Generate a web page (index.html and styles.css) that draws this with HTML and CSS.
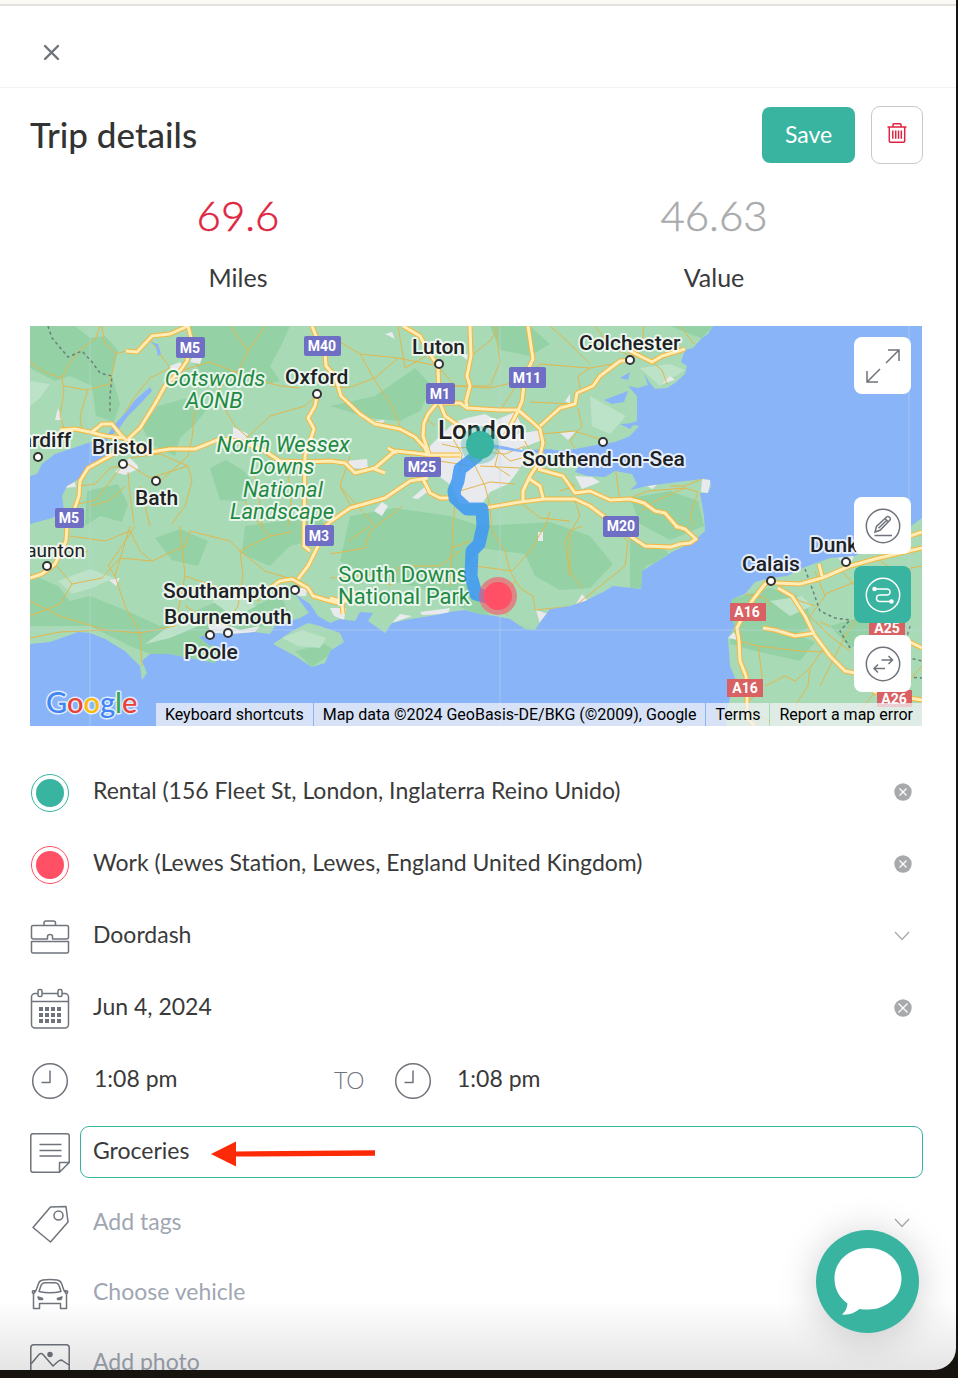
FILE: index.html
```html
<!DOCTYPE html>
<html lang="en">
<head>
    <meta charset="UTF-8">
    <meta name="viewport" content="width=device-width, initial-scale=1.0">
    <title>Trip details</title>
    <link rel="stylesheet" href="styles.css">
</head>
<body>
    <main class="panel">
        <div class="panel-bar">
            <button class="icon-button" type="button" aria-label="Close">
                <svg width="17" height="17" viewBox="0 0 17 17"><path d="M2 2l13 13M15 2L2 15" fill="none" stroke="#6f737b" stroke-width="2.4" stroke-linecap="round"/></svg>
            </button>
        </div>

        <header class="trip-header">
            <h1>Trip details</h1>
            <button class="save-button" type="button">Save</button>
            <button class="delete-button" type="button" aria-label="Delete trip">
                <svg width="20" height="20" viewBox="0 0 20 20" fill="none" stroke="#de2440" stroke-width="1.5">
                    <path d="M.5 4h19M6 4V1.700q0-.9.9-.9h6.200q.9 0 .9.900V4M2.300 4v14q0 1.200 1.200 1.200h13q1.200 0 1.200-1.200V4M5.800 7.500v8.300M8.700 7.500v8.300M11.500 7.500v8.300M14.300 7.500v8.300"/>
                </svg>
            </button>
        </header>

        <section class="stats">
            <div class="stat">
                <span class="stat-number miles">69.6</span>
                <span class="stat-label">Miles</span>
            </div>
            <div class="stat">
                <span class="stat-number value">46.63</span>
                <span class="stat-label">Value</span>
            </div>
        </section>

        <section class="map">
            <svg class="map-canvas" viewBox="0 0 892 400" preserveAspectRatio="xMidYMid slice">
                <defs>
                    <clipPath id="land-clip">
                        <path id="england" d="M0 0H683L678 8 672 12 663 22 655 24 651 36 657 40 655 48 645 57 637 62 625 63 620 57 614 48 618 59 608 62 598 60 607 70 607 95 598 98 609 100 600 110 585 116 566 119 545 123 520 125 548 129 549 140 545 146 558 150 575 151 585 145 602 148 607 158 600 164 617 160 640 157 672 153 680 154 681 160 678 167 670 167 674 190 675 205 665 214 655 220 642 226 636 230 612 245 611 263 583 260 575 265 555 275 540 280 520 283 510 296 505 304 495 303 480 293 465 290 450 288 435 284 420 286 400 290 375 294 362 297 355 307 338 295 343 287 330 286 325 295 310 293 300 297 288 290 280 278 265 268 279 287 270 292 245 300 240 308 225 306 200 308 185 307 172 313 183 318 190 328 185 337 165 333 140 328 120 328 112 335 117 347 112 354 110 340 95 325 75 313 60 307 48 306 40 309 20 316 0 318V198L22 192 34 185 32 170 37 160 50 152 60 140 80 130 75 118 80 110 55 118 25 128 12 138 7 148 0 150Z"/>
                        <path id="wight" d="M243 318L262 305 278 297 290 300 310 307 314 316 300 325 295 337 282 341 265 330Z"/>
                        <path id="france" d="M892 192L881 200 825 230 800 232 775 241 757 250 740 252 725 256 715 268 702 273 700 290 705 300 698 312 700 340 705 352 698 380 696 400H892Z"/>
                    </clipPath>
                    <g id="major-roads">
                        <path d="M158 0L161 12 157 35 150 45 135 60 125 78 110 102 98 113M96 25L107 26 122 10 140 8 158 0"/>
                        <path d="M30 104L45 103 60 106 75 110 95 112M62 106L72 98 82 98 90 108 97 115M98 113L115 127 140 123 165 123 190 113 210 115 235 125 250 135 275 136 300 135 315 137 325 147 345 142 365 125 385 127 400 129 430 129M358 122L367 127"/>
                        <path d="M95 120L80 130 58 142 50 155 49 170 42 190 37 200 36 215 25 238 12 248 0 252"/>
                        <path d="M282 0L288 15 295 25 296 40 305 50 311 70 330 88 345 98 370 103 385 111 395 122 398 130"/>
                        <path d="M287 70L285 80 278 92 284 103 275 130 274 200 274 220 280 225"/>
                        <path d="M373 0L390 10 400 28 408 40 409 75 415 90 425 97 435 105M440 0L441 30 437 50 440 60 436 75 437 82M498 0L503 33 495 50 492 75 488 85 475 110"/>
                        <path d="M399 128L393 110 394 97 398 88 407 77 430 77 437 82 470 84 488 84 500 94 510 103 513 117 508 138 500 150 493 165 493 176M393 153L400 167 410 172 420 172M455 182L490 176 515 173 545 173 560 180 580 195 600 210 615 220 641 221 650 218 660 217 666 213 655 203 645 200"/>
                        <path d="M508 143L533 150 545 167 560 165 580 174 600 173 614 177 625 185 635 187 648 202M498 152L510 160 513 172M342 142L355 147"/>
                        <path d="M600 34L590 35 570 50 563 60 547 67 545 78 530 82 510 100M600 25L622 36 632 30 655 23"/>
                        <path d="M398 152L380 155 355 172 320 182 300 196 290 205 288 220 278 240 268 253M240 262L250 255 262 253 278 262 283 270 300 275 312 278 313 288M300 272L314 276 324 264"/>
                        <path d="M741 255L735 258 722 275 712 292 707 302 709 315 710 335 716 350 717 370 717 392 725 400M745 257L770 258 792 252 820 240 845 233 870 227 892 222M789 238L792 250M748 262L762 270 775 290 785 310 800 330 815 345 825 347 845 366 892 374M733 302L745 304 765 310 785 307M872 312L892 322M880 210L892 206"/>
                    </g>
                </defs>

                <rect width="892" height="400" fill="#8ab4f8"/>
                <g fill="#a8dab5">
                    <use href="#england"/>
                    <use href="#wight"/>
                    <use href="#france"/>
                </g>

                <g clip-path="url(#land-clip)">
                    <!-- woodland and hills -->
                    <g fill="#94d2a5">
                        <path d="M0 0H45L60 12 75 10 88 24 82 50 90 78 84 96 66 90 62 60 40 50 25 55 0 42Z"/>
                        <path d="M160 0H260L250 22 240 40 250 55 230 60 196 48 175 52 165 38Z"/>
                        <path d="M128 80L165 70 178 82 165 98 150 112 145 130 120 118 112 100Z"/>
                        <path d="M180 142L196 134 214 145 222 155 216 175 190 174Z"/>
                        <path d="M57 165L88 158 98 178 92 196 70 190 55 200Z"/>
                        <path d="M0 248L28 260 40 275 60 270 95 284 130 300 165 285 200 270 225 280 250 268 258 285 235 300 190 308 190 340 120 328 100 320 60 300 0 300Z"/>
                        <path d="M125 212L150 203 178 215 168 240 142 234Z"/>
                        <path d="M215 200L290 190 300 210 260 220 240 240 212 228Z"/>
                        <path d="M300 80L345 70 385 42 402 60 390 85 370 95 340 92Z"/>
                        <path d="M320 190L365 182 420 190 450 200 520 196 560 210 583 238 560 262 530 264 505 250 495 228 450 222 430 250 460 290 505 304 445 288 390 262 340 250 310 235Z"/>
                        <path d="M600 172L640 165 668 175 674 200 640 214 610 198Z"/>
                        <path d="M600 212L636 224 640 232 615 240 612 262 600 262Z"/>
                        <path d="M265 325L295 318 305 325 282 341Z"/>
                        <path d="M702 273L740 262 775 272 782 300 765 308 785 316 770 335 725 325 700 318Z"/>
                        <path d="M800 300L835 290 845 310 820 322Z"/>
                        <path d="M640 0H683L672 12 660 8Z"/>
                        <path d="M460 0L500 0 520 18 500 30 470 24Z"/>
                    </g>
                    <g fill="#bce2c7">
                        <path d="M28 255L60 243 84 252 62 262 42 268ZM115 318L150 292 178 296 140 312ZM182 275L210 268 226 280 205 292ZM560 70L596 90 580 108 562 100ZM610 42L640 38 655 44 630 60ZM740 275L772 270 782 280 760 290ZM0 55L20 58 10 72 0 80ZM252 312L272 304 296 312 290 322 268 320Z"/>
                    </g>
                    <!-- built-up areas -->
                    <g fill="#e8eaed">
                        <path d="M437 92L455 88 466 94 485 86 492 100 485 108 512 104 512 114 492 122 494 136 486 148 478 158 460 166 452 178 430 178 422 160 398 142 400 120 412 108 425 96Z"/>
                        <path d="M85 146L100 132 108 140 108 143 95 149ZM203 101L218 108 216 114 203 114ZM140 40L150 36 155 42 142 50ZM315 135L337 133 338 143 320 142ZM545 150L562 151 570 156 552 163ZM530 107L546 105 538 114ZM25 94L28 82 32 94ZM165 26L172 32 170 38 160 36ZM355 8L362 6 365 13ZM432 30L438 28 437 34Z"/>
                        <path d="M178 300L195 298 210 304 230 300 225 306 200 310 183 312ZM264 262L277 262 276 270 268 270ZM79 254L90 252 86 260ZM300 282L316 282 314 294 304 290ZM362 297L370 288 382 290ZM390 286L420 282 418 288 392 289ZM506 284L518 288 510 298ZM546 278L552 268 558 275ZM508 206H513V215H508ZM672 153H681L678 167 671 166ZM617 160L628 158 622 163ZM632 58L640 50 645 54ZM698 312L704 306 708 314ZM808 232L824 229 822 235 812 236ZM33 162L45 156 46 161ZM345 95L355 94 350 100ZM382 172L398 158 400 164 388 173ZM535 75L540 68 540 78ZM344 185L352 176 358 180 352 190Z"/>
                    </g>
                    <!-- minor roads -->
                    <g class="minor-roads">
                        <path d="M0 36L14 46 32 52 34 66 30 90 34 102M32 52L38 40 50 24 66 12 70 0M34 60L56 64 80 58 86 28 74 16 72 0M86 28L96 25M58 64L50 90 52 104M120 12L130 28 140 42 120 52 104 72 92 92M150 45L180 36 215 50 250 60 270 62M200 0L218 25 210 42 190 62 188 72 205 100 225 118 244 136M218 25L235 0M208 120L240 90 275 80 288 68"/>
                        <path d="M100 132L130 128 158 140 162 155 155 180 142 198M158 140L120 152 98 138 80 142 65 158 48 160M98 146L100 168 104 198M92 140L66 174 48 178M125 160L158 130 162 112 165 78M110 160L120 200M96 160L78 175 60 180M220 138L228 160 232 200M255 140L262 165 258 200"/>
                        <path d="M40 210L75 215 100 205 110 225 122 235 155 220 160 205 200 215 210 225 240 210 262 206M122 235L90 232 72 252 42 258 25 238M100 200L85 250 95 280 110 307 145 300 155 250 150 200M0 290L30 278 42 258M110 307L112 340M110 307L75 304 30 306 0 312M210 225L213 250 208 280 195 300M210 225L235 245 262 253M155 280L180 295 200 300M155 250L190 262 230 275M0 275L30 290 75 304M58 226L36 222 30 230M85 250L78 240 100 208 105 200M240 210L222 190 215 175"/>
                        <path d="M300 10L330 28 345 55 362 80 370 100M330 28L368 32 408 40 425 60 460 62 490 55 510 38 560 42 600 35M368 32L345 52 318 62 300 60M415 60L460 60 470 36 465 0M441 30L460 15 470 0M400 28L375 42 368 0M470 84L485 62M545 78L500 76M512 108L545 105 575 115M560 42L548 50 550 62M520 0L540 18 560 38M565 0L580 20 600 30M548 82L552 100 540 115 545 122M614 0L612 20 600 34M650 0L664 18M622 36L632 44 637 58M640 160L655 160 672 153M600 172L618 165 655 162 668 166 660 190 664 200M655 162L625 175 612 185"/>
                        <path d="M412 118L430 122 450 120M420 108L432 128 430 145M460 118L480 135 500 130M455 126L475 128 495 120M450 140L490 142M430 165L460 156 485 158M440 130L455 160 460 180M470 120L465 140 480 150M410 135L440 140M405 100L395 92M492 110L500 125 508 130M380 130L400 140"/>
                        <path d="M300 228L335 222 340 205 360 190 372 180M420 260L422 222 425 172M422 222L440 215M300 252L350 248 360 260 370 240 410 240 430 225M460 182L462 205 475 225 480 245 490 262 503 270 505 284 545 280M482 245L500 225 515 200 520 185M545 280L560 268 595 240 598 215 580 200M482 245L460 242 445 240M485 255L470 280 478 290M540 250L535 215 550 190 545 175M552 200L540 205 540 245 552 262M340 200L318 215M490 176L510 192 540 195M320 130L310 160 322 182M310 160L345 200M530 150L545 160 530 165M565 150L585 140 590 175"/>
                        <path d="M715 268L735 272 740 280M709 315L728 320 732 350 725 370 717 375M728 320L770 325 800 326M735 360L755 350 765 355 780 342 795 320M780 342L778 360 765 380 775 400M812 245L825 260M785 245L795 270 780 290 800 310 820 325M795 268L835 252 855 262M840 270L815 310 790 360M845 366L830 385 850 400M717 385L740 395M762 268L770 275 785 280M790 296L800 300M892 340L870 365 860 400M850 235L865 245 892 240"/>
                    </g>
                    <g class="borders">
                        <path d="M18 0L22 12 38 31 52 25 62 36 70 47 82 50 80 70 80 88M775 243L782 262 790 285 805 292 820 294 810 305 820 322M880 300L872 330 892 335M860 350L892 352"/>
                    </g>
                </g>

                <!-- estuaries -->
                <g fill="#8ab4f8">
                    <path d="M78 108L85 98 97 85 105 74 120 61 122 65 110 78 98 90 88 104 80 110ZM574 74L598 65 594 76 582 78ZM590 52L600 46 598 54ZM590 98L605 97 600 103ZM462 118L492 124 520 123 540 128 520 128 490 126 462 122ZM120 16L128 18 131 28 128 30 126 20ZM169 311L190 307 200 315 180 320Z"/>
                </g>

                <use class="major-case" href="#major-roads"/>
                <use class="major-fill" href="#major-roads"/>
                <path class="grid-lines" d="M60 0V400M470 0V400M879 0V400M0 304H892"/>

                <g class="places">
                    <circle cx="8" cy="131" r="4"/><circle cx="93" cy="138" r="4"/><circle cx="126" cy="155" r="4"/>
                    <circle cx="17" cy="240" r="4"/><circle cx="265" cy="264" r="4"/><circle cx="180" cy="309" r="4"/>
                    <circle cx="198" cy="307" r="4"/><circle cx="287" cy="68" r="4"/><circle cx="409" cy="38" r="4"/>
                    <circle cx="600" cy="34" r="4"/><circle cx="573" cy="116" r="4"/><circle cx="741" cy="255" r="4"/>
                    <circle cx="816" cy="236" r="4"/>
                </g>

                <g class="cities">
                    <text x="-23" y="121">Cardiff</text>
                    <text x="62" y="128">Bristol</text>
                    <text x="105" y="179">Bath</text>
                    <text x="-14" y="231" class="town">Taunton</text>
                    <text x="133" y="272">Southampton</text>
                    <text x="134" y="298">Bournemouth</text>
                    <text x="154" y="333">Poole</text>
                    <text x="255" y="58">Oxford</text>
                    <text x="382" y="28">Luton</text>
                    <text x="549" y="24">Colchester</text>
                    <text x="408" y="113" class="capital">London</text>
                    <text x="492" y="140">Southend-on-Sea</text>
                    <text x="712" y="245">Calais</text>
                    <text x="780" y="226">Dunkirk</text>
                </g>
                <g class="parks">
                    <text x="185" y="60">Cotswolds</text>
                    <text x="184" y="82">AONB</text>
                    <text x="253" y="126">North Wessex</text>
                    <text x="252" y="148">Downs</text>
                    <text x="253" y="171">National</text>
                    <text x="252" y="193">Landscape</text>
                    <text class="upright" x="373" y="256">South Downs</text>
                    <text class="upright" x="374" y="278">National Park</text>
                </g>

                <g fill="#6f6ec5">
                    <rect x="146" y="11" width="29" height="21" rx="2"/><rect x="274" y="10" width="37" height="20" rx="2"/>
                    <rect x="396" y="57" width="29" height="21" rx="2"/><rect x="479" y="41" width="37" height="21" rx="2"/>
                    <rect x="374" y="131" width="37" height="20" rx="2"/><rect x="25" y="182" width="29" height="20" rx="2"/>
                    <rect x="275" y="199" width="29" height="21" rx="2"/><rect x="573" y="190" width="36" height="21" rx="2"/>
                </g>
                <g fill="#da6163">
                    <rect x="700" y="277" width="36" height="18"/><rect x="697" y="353" width="36" height="18"/>
                    <rect x="839" y="293" width="36" height="16"/><rect x="847" y="364" width="35" height="17"/>
                </g>
                <g class="shields">
                    <text x="160" y="27">M5</text><text x="292" y="25">M40</text><text x="410" y="73">M1</text><text x="497" y="57">M11</text>
                    <text x="392" y="146">M25</text><text x="39" y="197">M5</text><text x="289" y="215">M3</text><text x="591" y="205">M20</text>
                    <text x="717" y="291">A16</text><text x="715" y="367">A16</text><text x="857" y="307">A25</text><text x="864" y="378">A26</text>
                </g>

                <!-- driven route -->
                <path class="route" d="M449 119L447 130 430 143 428 155 424 165 425 172 437 183 452 183 453 200 449 218 442 225 441 250 446 268 460 272"/>
                <circle cx="450" cy="119" r="19" fill="#38b4a0" opacity=".35"/>
                <circle cx="450" cy="119" r="14" fill="#38b4a0"/>
                <circle cx="468" cy="270" r="19" fill="#ff5065" opacity=".6"/>
                <circle cx="468" cy="270" r="14" fill="#ff5065"/>

                <text class="google" x="16" y="387"><tspan fill="#4285f4">G</tspan><tspan fill="#ea4335">o</tspan><tspan fill="#fbbc04">o</tspan><tspan fill="#4285f4">g</tspan><tspan fill="#34a853">l</tspan><tspan fill="#ea4335">e</tspan></text>
            </svg>

            <div class="map-credits">
                <button type="button">Keyboard shortcuts</button>
                <span>Map data ©2024 GeoBasis-DE/BKG (©2009), Google</span>
                <a href="#">Terms</a>
                <a href="#">Report a map error</a>
            </div>

            <div class="map-tools">
                <button class="map-tool" type="button" aria-label="Expand map">
                    <svg width="34" height="34" viewBox="0 0 34 34"><path d="M20 14L33 1M22 1H33V12M14 20L1 33M1 22V33H12"/></svg>
                </button>
                <button class="map-tool first-tool" type="button" aria-label="Edit route">
                    <svg width="36" height="36" viewBox="0 0 36 36"><circle cx="18" cy="18" r="16.700"/><path d="M9.500 27.500H27M10 24L11.500 18.500 21.500 9q1.500-1 3 .3t.3 3L15 22.300ZM20 10.500L23.500 14M13.500 20.300L22 12"/></svg>
                </button>
                <button class="map-tool active" type="button" aria-label="Show route">
                    <svg width="36" height="36" viewBox="0 0 36 36"><circle cx="18" cy="18" r="16.700"/><path d="M10 12H21.500q3.500 0 3.500 3t-3.500 3H15q-3.500 0-3.500 3.200t3.500 3.200H26"/><circle class="dot" cx="9.500" cy="12" r="1.500"/><circle class="dot" cx="26.500" cy="24.400" r="1.500"/></svg>
                </button>
                <button class="map-tool" type="button" aria-label="Return trip">
                    <svg width="36" height="36" viewBox="0 0 36 36"><circle cx="18" cy="18" r="16.700"/><path d="M16.500 14H27.500M23.500 10L27.500 14 23.500 18M20 22.500H9M13 18.500L9 22.500 13 26.500"/></svg>
                </button>
            </div>
        </section>

        <form class="trip-form">
            <div class="row">
                <label class="row-icon" for="start" aria-label="Start"><span class="marker start"></span></label>
                <input class="field" id="start" type="text" value="Rental (156 Fleet St, London, Inglaterra Reino Unido)">
                <button class="clear" type="button" aria-label="Clear start"><svg width="18" height="18" viewBox="0 0 18 18"><circle cx="9" cy="9" r="8.700"/><path d="M5.500 5.500l7 7M12.500 5.500l-7 7"/></svg></button>
            </div>
            <div class="row">
                <label class="row-icon" for="end" aria-label="End"><span class="marker end"></span></label>
                <input class="field" id="end" type="text" value="Work (Lewes Station, Lewes, England United Kingdom)">
                <button class="clear" type="button" aria-label="Clear end"><svg width="18" height="18" viewBox="0 0 18 18"><circle cx="9" cy="9" r="8.700"/><path d="M5.500 5.500l7 7M12.500 5.500l-7 7"/></svg></button>
            </div>
            <div class="row">
                <label class="row-icon" for="purpose" aria-label="Purpose">
                    <svg width="40" height="40" viewBox="0 0 40 40"><path d="M14 8V6q0-2 2-2h7.500q2 0 2 2V8M17.500 22H3.500q-2 0-2-2V10q0-1.500 1.500-1.500H37q1.500 0 1.500 1.500V20q0 2-2 2H22.500V19.500q0-2-2.500-2t-2.500 2ZM1.500 24.500H38.500V34.500q0 1.500-1.500 1.500H3q-1.500 0-1.500-1.500Z"/></svg>
                </label>
                <select class="field" id="purpose"><option>Doordash</option></select>
                <svg class="chevron" width="16" height="10" viewBox="0 0 16 10"><path d="M1 1l7 7.500L15 1"/></svg>
            </div>
            <div class="row">
                <label class="row-icon" for="date" aria-label="Date">
                    <svg width="40" height="42" viewBox="0 0 40 42"><rect x="1.500" y="5.500" width="37" height="34.500" rx="3.500"/><path d="M1.500 13.500H38.500"/><rect class="paper" x="8" y="1.500" width="4" height="7" rx="1.500"/><rect class="paper" x="28" y="1.500" width="4" height="7" rx="1.500"/><path class="days" d="M9 21H31M9 27H31M9 33H31"/></svg>
                </label>
                <input class="field" id="date" type="text" value="Jun 4, 2024">
                <button class="clear" type="button" aria-label="Clear date"><svg width="18" height="18" viewBox="0 0 18 18"><circle cx="9" cy="9" r="8.700"/><path d="M4.500 4.500l9 9M13.500 4.500l-9 9"/></svg></button>
            </div>
            <div class="row">
                <label class="row-icon" for="from-time" aria-label="Start time">
                    <svg width="40" height="40" viewBox="0 0 40 40"><circle cx="20" cy="20" r="17.300"/><path d="M20 9.500V21.500H11.500"/></svg>
                </label>
                <input class="field time" id="from-time" type="text" value="1:08 pm">
                <span class="to">TO</span>
                <label class="row-icon" for="to-time" aria-label="End time">
                    <svg width="40" height="40" viewBox="0 0 40 40"><circle cx="20" cy="20" r="17.300"/><path d="M20 9.500V21.500H11.500"/></svg>
                </label>
                <input class="field time" id="to-time" type="text" value="1:08 pm">
            </div>
            <div class="row">
                <label class="row-icon" for="notes" aria-label="Notes">
                    <svg width="40" height="40" viewBox="0 0 40 40"><path d="M3 .8H37q2.200 0 2.200 2.200V29.500L29.500 39.200H3q-2.200 0-2.200-2.200V3Q.8.8 3 .8ZM29.500 39V29.500H39M9.500 11.500H31.500M9.500 17.500H31.500M9.500 23H31.500"/></svg>
                </label>
                <input class="field notes" id="notes" type="text" value="Groceries">
                <svg class="arrow" width="164" height="26" viewBox="0 0 164 26"><path d="M0 13L25 .5V10.500L164 9.200V14.700L25 15.500V25.500Z" fill="#fd2a07"/></svg>
            </div>
            <div class="row short">
                <label class="row-icon" for="tags" aria-label="Tags">
                    <svg width="40" height="40" viewBox="0 0 40 40"><path d="M20.500 3L36 2.500 38 18 20.500 38 3 23.500Z"/><circle cx="28.500" cy="11.500" r="4.500"/></svg>
                </label>
                <select class="field empty" id="tags"><option>Add tags</option></select>
                <svg class="chevron" width="16" height="10" viewBox="0 0 16 10"><path d="M1 1l7 7.500L15 1"/></svg>
            </div>
            <div class="row short">
                <label class="row-icon" for="vehicle" aria-label="Vehicle">
                    <svg width="40" height="40" viewBox="0 0 40 40"><path d="M3.500 20L6 16.500 8.500 9.500Q9.500 6.500 13 6 20 5 27 6q3.500.5 4.500 3.500L34 16.500 36.500 20V34.500H30.500V29.500H9.500V34.500H3.500ZM9 17.500L11 11.500Q12 9 14.500 8.800H25.500Q28 9 29 11.500L31 17.500Q20 20 9 17.500ZM6 16.500L2.500 17V19L4 20M34 16.500L37.500 17V19L36 20"/><path class="solid" d="M8 23L12.500 24.500V25.500H9ZM32 23L27.500 24.500V25.500H31Z"/></svg>
                </label>
                <select class="field empty" id="vehicle"><option>Choose vehicle</option></select>
            </div>
            <div class="row short">
                <span class="row-icon">
                    <svg width="40" height="40" viewBox="0 0 40 40"><rect x=".8" y=".8" width="38.400" height="38.400" rx="3"/><path d="M1 20L9 10.500Q11 8.500 13 10.500L23 22 28 17.500Q31 15 33 17L39 21"/><circle class="solid" cx="20" cy="10.500" r="2"/></svg>
                </span>
                <button class="field empty photo" type="button">Add photo</button>
            </div>
        </form>
        <div class="panel-fade"></div>
    </main>

    <button class="chat" type="button" aria-label="Open chat">
        <svg width="68" height="68" viewBox="0 0 68 68"><path d="M34 0C53 0 67.500 13 67.500 30.500S53 61.500 34 61.500Q29 61.500 25.500 61 18 67.500 8 66.500 13 62 13.500 55.500 .5 46 .5 30.500C.5 13 15 0 34 0Z" fill="#fff"/></svg>
    </button>
</body>
</html>
```

FILE: styles.css
```css
* {
    box-sizing: border-box;
}
body {
    margin: 0;
    height: 100vh;
    overflow: hidden;
    padding: 0 2px 8px 0;
    background: #17130f;
    font-family: Lato, "Open Sans", sans-serif;
    font-weight: 400;
    color: #3a3a3a;
}
button, input, select {
    font: inherit;
    color: inherit;
    border: 0;
    padding: 0;
    margin: 0;
    background: none;
}
button {
    cursor: pointer;
}
svg {
    display: block;
}
.panel {
    position: relative;
    height: 100%;
    overflow: hidden;
    background: #fff;
    border-top: 4px solid #faf9f5;
    border-bottom-right-radius: 22px;
}
.panel-bar {
    height: 84px;
    padding: 12px 43px 0;
    border-top: 2px solid #e2e1de;
    border-bottom: 1px solid #f2f2f2;
    display: flex;
    align-items: center;
}

/* title and actions */
.trip-header {
    display: flex;
    align-items: center;
    gap: 16px;
    padding: 18px 33px 0 30px;
}
h1 {
    flex: 1;
    margin: 0;
    padding-bottom: 2px;
    font-size: 35px;
    line-height: 56px;
    font-weight: 500;
    color: #333;
}
.save-button {
    width: 93px;
    height: 56px;
    padding-bottom: 2px;
    border-radius: 8px;
    background: #38b4a0;
    color: #fff;
    font-size: 23px;
}
.delete-button {
    width: 52px;
    height: 58px;
    border: 1px solid #c9c9cc;
    border-radius: 9px;
    display: flex;
    align-items: center;
    justify-content: center;
    padding-bottom: 4px;
}

/* totals */
.stats {
    display: grid;
    grid-template-columns: 1fr 1fr;
    padding: 23px 4px 0 0;
}
.stat {
    display: flex;
    flex-direction: column;
    align-items: center;
}
.stat-number {
    font-size: 42px;
    line-height: 56px;
    font-weight: 300;
    -webkit-text-stroke: 0.5px;
}
.stat-label {
    font-size: 25px;
    line-height: 32px;
    margin-top: 18px;
}
.miles {
    color: #de2440;
}
.value {
    color: #a8a9ab;
}

/* map */
.map {
    position: relative;
    height: 400px;
    margin: 33px 34px 0 30px;
    overflow: hidden;
}
.map-canvas {
    width: 100%;
    height: 100%;
    font-family: Roboto, sans-serif;
}
.minor-roads {
    fill: none;
    stroke: #e3b64b;
    stroke-width: 1;
}
.borders {
    fill: none;
    stroke: #6a7f78;
    stroke-width: 1.5;
    stroke-dasharray: 3 3;
}
.major-case {
    fill: none;
    stroke: #f5b63e;
    stroke-width: 5;
    stroke-linejoin: round;
}
.major-fill {
    fill: none;
    stroke: #ffedb8;
    stroke-width: 3;
    stroke-linejoin: round;
}
.grid-lines {
    fill: none;
    stroke: #c5d5e8;
    stroke-opacity: 0.5;
}
.places {
    fill: #fff;
    stroke: #333;
    stroke-width: 2;
}
.cities text, .parks text, .google {
    paint-order: stroke;
    stroke: #fff;
    stroke-opacity: 0.75;
    stroke-width: 4px;
    stroke-linejoin: round;
}
.cities {
    font-size: 21px;
    font-weight: 500;
    fill: #202124;
}
.cities .town {
    font-size: 19px;
    font-weight: 400;
}
.cities .capital {
    font-size: 26px;
}
.parks {
    font-size: 22px;
    font-weight: 400;
    font-style: italic;
    text-anchor: middle;
    fill: #1e8a44;
}
.parks .upright {
    font-style: normal;
}
.shields {
    font-size: 14px;
    font-weight: 700;
    text-anchor: middle;
    fill: #fff;
}
.route {
    fill: none;
    stroke: #3c96f5;
    stroke-opacity: 0.85;
    stroke-width: 13;
    stroke-linejoin: round;
    stroke-linecap: round;
}
.google {
    font-family: Lato, sans-serif;
    font-size: 29px;
    font-weight: 500;
    stroke-width: 3px;
}
.map-credits {
    position: absolute;
    right: 0;
    bottom: 0;
    display: flex;
    gap: 1px;
    color: #000;
    font-family: Roboto, sans-serif;
    font-size: 16px;
    font-weight: 400;
    line-height: 23px;
    white-space: nowrap;
}
.map-credits > * {
    padding: 0 9px;
    background: rgba(240, 242, 245, 0.75);
    color: inherit;
    text-decoration: none;
}
.map-tools {
    position: absolute;
    top: 11px;
    right: 11px;
    bottom: 34px;
    display: flex;
    flex-direction: column;
    gap: 12px;
}
.map-tool {
    width: 57px;
    height: 57px;
    border-radius: 8px;
    background: #fff;
    color: #6f737b;
    display: flex;
    align-items: center;
    justify-content: center;
}
.map-tool svg {
    fill: none;
    stroke: currentColor;
    stroke-width: 1.5;
}
.map-tool .dot {
    fill: currentColor;
}
.first-tool {
    margin-top: auto;
}
.map-tool.active {
    background: #38b4a0;
    color: #fff;
}

/* form */
.trip-form {
    padding: 30px 33px 0 30px;
    font-size: 23px;
}
.row {
    position: relative;
    display: flex;
    align-items: center;
    height: 72px;
}
.row.short {
    height: 70px;
}
.row-icon {
    flex: none;
    width: 40px;
    padding-top: 2px;
    display: flex;
    justify-content: center;
}
.row-icon svg {
    fill: none;
    stroke: #6f737b;
    stroke-width: 1.5;
    stroke-linejoin: round;
}
.row-icon .solid {
    fill: #6f737b;
}
.row-icon .paper {
    fill: #fff;
}
.row-icon .days {
    stroke-width: 4;
    stroke-dasharray: 4 2;
}
.marker {
    width: 38px;
    height: 38px;
    border: 1px solid;
    border-radius: 50%;
    background: currentColor;
    background-clip: content-box;
    padding: 4px;
}
.start {
    color: #38b4a0;
}
.end {
    color: #ff5065;
}
.field {
    flex: 1;
    min-width: 0;
    height: 52px;
    margin-left: 10px;
    padding: 0 12px 4px;
    border: 1px solid transparent;
    border-radius: 9px;
    appearance: none;
    text-align: left;
    outline: 0;
}
.notes {
    border-color: #38b4a0;
}
.empty {
    color: #a0a6b2;
}
.time {
    flex: none;
    width: 220px;
    padding-left: 13px;
}
.to {
    width: 93px;
    padding-left: 34px;
    font-weight: 300;
    color: #6f737b;
}
.clear {
    position: absolute;
    right: 11px;
}
.clear circle {
    fill: #a8a9ab;
}
.clear path {
    stroke: #fff;
    stroke-width: 1.3;
}
.chevron {
    position: absolute;
    right: 13px;
    fill: none;
    stroke: #a8a9ab;
    stroke-width: 1.3;
    pointer-events: none;
}
.arrow {
    position: absolute;
    left: 181px;
    top: 25px;
    pointer-events: none;
}
.panel-fade {
    position: absolute;
    left: 0;
    right: 0;
    bottom: 0;
    height: 70px;
    background: linear-gradient(rgba(0, 0, 0, 0), rgba(0, 0, 0, 0.1));
    pointer-events: none;
}
.chat {
    position: fixed;
    right: 39px;
    bottom: 45px;
    width: 103px;
    height: 103px;
    border-radius: 50%;
    background: #38b4a0;
    box-shadow: 0 4px 40px rgba(0, 0, 0, 0.2);
    display: flex;
    align-items: center;
    justify-content: center;
}
```
